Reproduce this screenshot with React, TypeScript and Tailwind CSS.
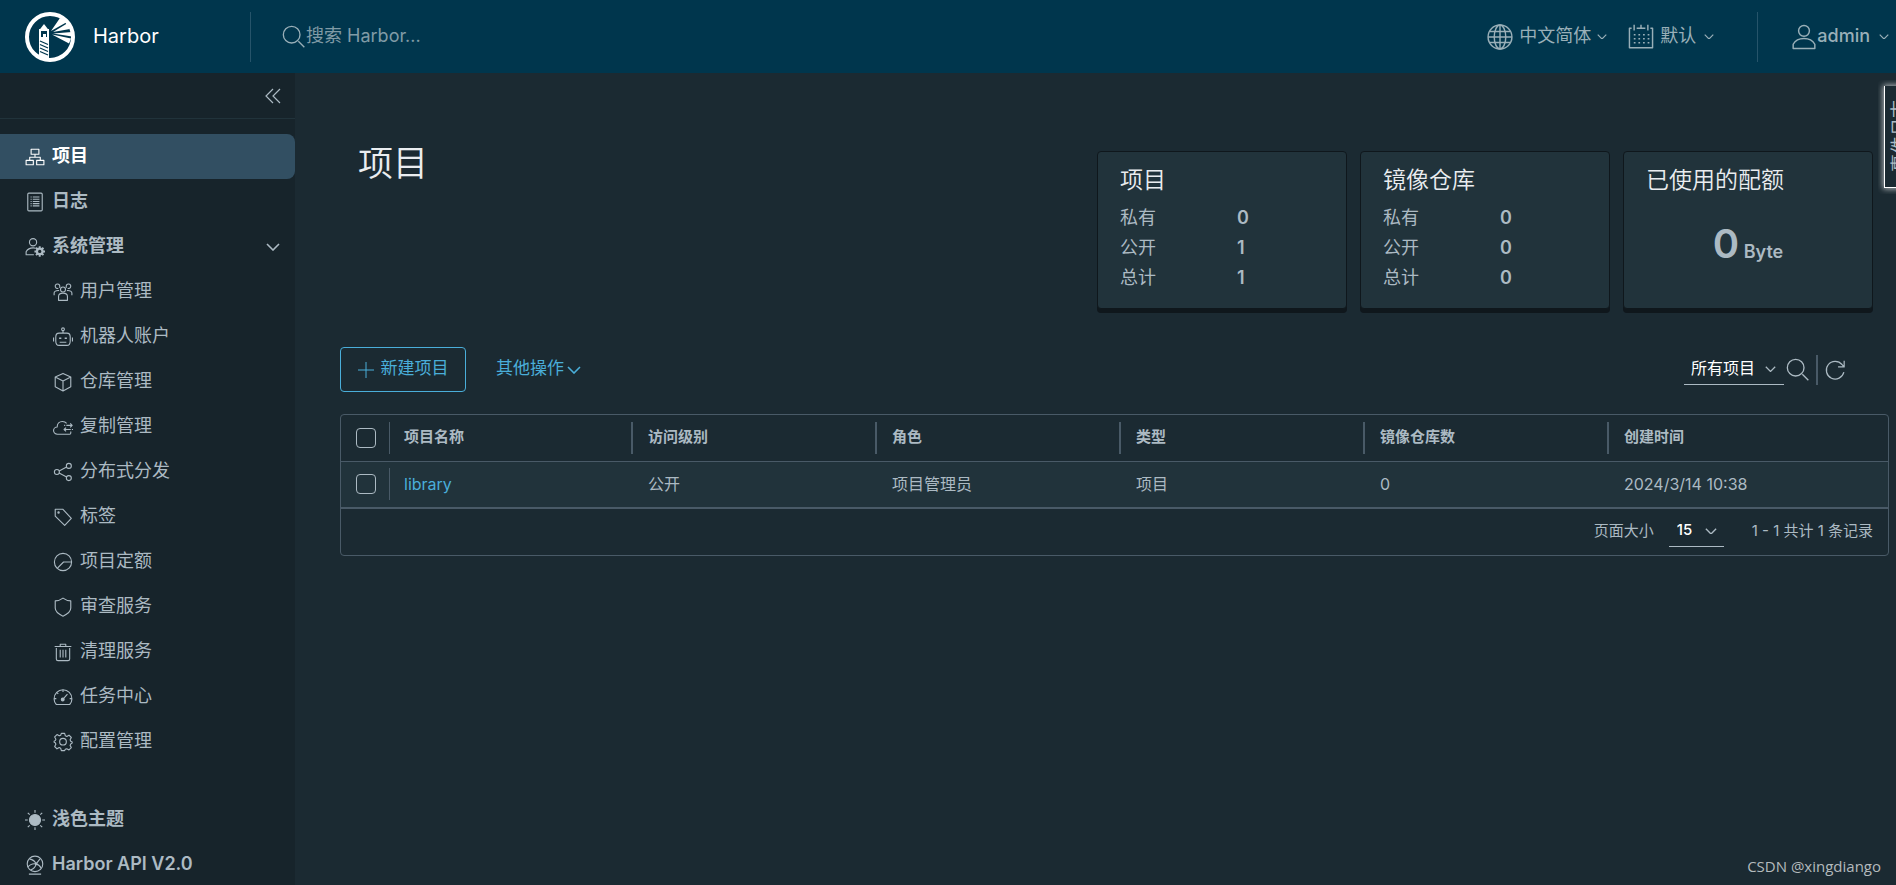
import React, { useState } from 'react';

interface IconProps {
  className?: string;
  children?: React.ReactNode;
}

// All line icons share one 36 x 36 grid
const Icon: React.FC<IconProps> = ({ className, children }) => (
  <svg
    viewBox="0 0 36 36"
    fill="none"
    stroke="currentColor"
    strokeWidth={2}
    strokeLinejoin="round"
    aria-hidden="true"
    className={`shrink-0 ${className ?? 'size-5'}`}
  >
    {children}
  </svg>
);

const Chevron: React.FC<{ className?: string }> = ({ className }) => (
  <svg viewBox="0 0 14 8" fill="none" stroke="currentColor" strokeWidth={1.6} aria-hidden="true" className={`shrink-0 ${className ?? ''}`}>
    <path d="M1 1l6 6 6-6" />
  </svg>
);

const icons = {
  projects: (
    <>
      <path d="M11 4h14v9H11zM2 24h13v8H2zM21 24h13v8H21z" />
      <path d="M18 13v5M8.500 24v-5.500h19V24" />
    </>
  ),
  logs: (
    <>
      <rect x="5" y="2" width="26" height="32" rx="2" />
      <path d="M10 9h2M14 9h12M10 13h2M14 13h12M10 17h2M14 17h12M10 21h2M14 21h12M10 25h2M14 25h12" />
    </>
  ),
  admin: (
    <>
      <circle cx="14.500" cy="9.500" r="6.500" />
      <path d="M16 32H2v-5.500c2.500-4.500 7-7 12.500-7 1.800 0 3.300.2 4.800.8" />
      <circle cx="26.500" cy="26" r="5" strokeWidth={4} />
      <path d="M26.500 16.500v4M26.500 31.500v4M17 26h4M32 26h4M19.800 19.300l2.800 2.800M30.400 29.900l2.800 2.800M33.200 19.300l-2.800 2.800M22.600 29.900l-2.800 2.800" strokeWidth={3.5} />
    </>
  ),
  users: (
    <>
      <circle cx="18" cy="13.500" r="4.500" />
      <path d="M10 33v-7c0-4 3.500-6 8-6s8 2 8 6v7z" />
      <path d="M12 10.500c1-5-1-7-4-7s-5 3-3.500 6c1 2 3 2.500 5 2M24 10.500c-1-5 1-7 4-7s5 3 3.500 6c-1 2-3 2.500-5 2M2 24v-4c0-3 3-5 9-4.500M34 24v-4c0-3-3-5-9-4.500" />
    </>
  ),
  robot: (
    <>
      <path d="M11 11h14c4 0 6 3 6 7v7c0 4-2 8-6 8H11c-4 0-6-4-6-8v-7c0-4 2-7 6-7z" />
      <circle cx="18" cy="4" r="2.500" />
      <path d="M18 6.500V11M1 19v7M35 19v7M12 27.500h12" />
      <path d="M11 19h4v2.500h-4zM21 19h4v2.500h-4z" fill="currentColor" stroke="none" />
    </>
  ),
  registry: <path d="M18 2.500l14 6.500v17.500L18 34 4 26.500V9zM4 9l14 7 14-7M18 16v18" />,
  replication: (
    <>
      <path d="M32 26v3c0 1-1 2-2 2H8c-4 0-7-3-7-6.500C1 21 4 18 7.500 18c0-6 4-10 9.500-10 3 0 5.500 1 7.500 3.500" />
      <path d="M20 15h2M24 15h10M31 11.500l3.500 3.500-3.500 3.500M36 22.500h-2M32 22.500H20M23.500 19L20 22.500l3.500 3.500" />
    </>
  ),
  share: (
    <>
      <circle cx="7" cy="18" r="4.500" />
      <circle cx="28.500" cy="7" r="4.500" />
      <circle cx="28.500" cy="29" r="4.500" />
      <path d="M11 16l13.500-7M11 20l13.500 7" />
    </>
  ),
  tag: (
    <>
      <path d="M4 4h13.500L33 20.500 21 33 4 16.500z" />
      <circle cx="10" cy="10" r="1.200" />
    </>
  ),
  quota: (
    <>
      <circle cx="18" cy="18" r="15.500" />
      <path d="M33 18H19L8 29" />
    </>
  ),
  shield: <path d="M18 2c4 3 8.500 5 14 5v13c0 7-5 10.500-14 14.500C9 30.500 4 27 4 20V7c5.500 0 10-2 14-5z" />,
  trash: (
    <>
      <path d="M3 8h30M13 8V4h10v4M6 11v19.500c0 2 1 3 3 3h18c2 0 3-1 3-3V11" />
      <path d="M13 14v14M18 14v14M23 14v14" />
    </>
  ),
  gauge: (
    <>
      <path d="M6 31.500C3.500 29 2 25.500 2 21.500 2 12.500 9 5 18 5s16 7.500 16 16.500c0 4-1.500 7.500-4 10z" />
      <path d="M18 5v4M2 21h4M30 21h4M7 10l2.500 2.500M18 22l8-9" />
      <circle cx="17.500" cy="22.500" r="2.500" fill="currentColor" />
    </>
  ),
  cog: (
    <>
      <path d="M15 2.500h6l1.200 4.300 2.600 1.100 4-2.200 4.200 4.200-2.200 4 1.100 2.600 2.600 1.500v2l-2.600 1.500-1.100 2.600 2.200 4-4.200 4.200-4-2.200-2.600 1.100L21 33.500h-6l-1.200-4.300-2.600-1.100-4 2.200L3 26.100l2.200-4-1.100-2.600L2 18.500v-2l2.100-1 1.100-2.600-2.200-4L7.200 4.700l4 2.200 2.600-1.100z" />
      <circle cx="18" cy="17.500" r="6" />
    </>
  ),
  sun: (
    <>
      <circle cx="18" cy="18" r="10" fill="currentColor" />
      <path d="M18 0v5M18 31v5M0 18h5M31 18h5M5 5l3.500 3.500M27.500 27.500L31 31M31 5l-3.500 3.500M8.500 27.500L5 31" />
    </>
  ),
  api: (
    <>
      <circle cx="18" cy="16" r="14" />
      <path d="M7 34.500h22M8 7c5 1 10 4 12 9 4 1 7 3 9 8M20 16c-5-1-11 1-15 6M20 16c-1 6-4 9-10 11M20 16l7-9" />
      <circle cx="20" cy="16" r="1.500" fill="currentColor" />
    </>
  ),
};

type IconName = keyof typeof icons;

interface NavItem {
  label: string;
  icon: IconName;
}

const adminItems: NavItem[] = [
  { label: '用户管理', icon: 'users' },
  { label: '机器人账户', icon: 'robot' },
  { label: '仓库管理', icon: 'registry' },
  { label: '复制管理', icon: 'replication' },
  { label: '分布式分发', icon: 'share' },
  { label: '标签', icon: 'tag' },
  { label: '项目定额', icon: 'quota' },
  { label: '审查服务', icon: 'shield' },
  { label: '清理服务', icon: 'trash' },
  { label: '任务中心', icon: 'gauge' },
  { label: '配置管理', icon: 'cog' },
];

const stats = [
  { title: '项目', rows: [['私有', 0], ['公开', 1], ['总计', 1]] },
  { title: '镜像仓库', rows: [['私有', 0], ['公开', 0], ['总计', 0]] },
];

const columns = ['项目名称', '访问级别', '角色', '类型', '镜像仓库数', '创建时间'];

const projects = [
  { name: 'library', access: '公开', role: '项目管理员', type: '项目', repos: 0, created: '2024/3/14 10:38' },
];

const SearchIcon: React.FC<{ className?: string }> = ({ className }) => (
  <Icon className={className}>
    <circle cx="14.500" cy="14.500" r="12.500" />
    <path d="M24.500 24.500l9 9" />
  </Icon>
);

const Logo = () => (
  <svg viewBox="0 0 50 50" className="size-[50px] shrink-0" aria-hidden="true">
    <circle cx="25" cy="25" r="23" fill="none" stroke="#fff" strokeWidth={4} />
    {/* Light beams */}
    <path d="M26 19L35 6l7 4zM28 20l14-8.500 3 5.500zM28 21.500l19-1.500v4.500zM27 22.500l19 4-2 5z" fill="#fff" />
    {/* Tower */}
    <path d="M14 18.500l5-6.500 5 6.500z" fill="#fff" />
    <path d="M15 18h8v8h-8z" fill="none" stroke="#fff" strokeWidth={2} />
    <path d="M18 22h3v3h-3z" fill="#fff" />
    <path d="M14 27h10v21l-10-3z" fill="#fff" />
    <path d="M15 29l8 3.500M15 32.500l8 3.500M15 36l8 3.500M15 39.500l8 3.500" stroke="#00364d" strokeWidth={1.3} />
  </svg>
);

const NavLink: React.FC<NavItem & { active?: boolean; nested?: boolean }> = ({ label, icon, active, nested }) => (
  <a
    href="#"
    className={`flex h-[45px] shrink-0 items-center gap-[7px] text-lg ${nested ? 'pl-[53px]' : 'pl-[25px] font-semibold'} ${active ? 'rounded-r-lg bg-[#324f62] text-white' : ''}`}
  >
    <Icon className="size-5">{icons[icon]}</Icon>
    <span className="pb-[2px]">{label}</span>
  </a>
);

const Checkbox: React.FC<{ label: string; checked: boolean; onChange: () => void }> = ({ label, checked, onChange }) => (
  <input
    type="checkbox"
    aria-label={label}
    checked={checked}
    onChange={onChange}
    className="block size-5 appearance-none rounded-sm border border-[#acbac3] checked:bg-[#4aaed9]"
  />
);

export default function App() {
  const [search, setSearch] = useState('');
  const [menuOpen, setMenuOpen] = useState(true);
  const [selected, setSelected] = useState<string[]>([]);

  const toggle = (name: string) =>
    setSelected(selected.includes(name) ? selected.filter(n => n !== name) : [...selected, name]);
  const allSelected = selected.length === projects.length;

  return (
    <div className="flex h-screen flex-col overflow-hidden bg-[#1b2a32] font-['Inter','Noto_Sans_CJK_SC',sans-serif] text-base text-[#acbac3]">
      {/* Header */}
      <header className="flex h-[73px] shrink-0 items-center bg-[#00364d] text-lg text-[#99afb8]">
        <a href="#" className="flex h-[50px] w-[251px] items-center gap-[18px] border-r border-[#26546a] pl-[25px] text-xl text-white">
          <Logo />
          <span className="pb-[2px]">Harbor</span>
        </a>
        <label className="flex flex-1 items-center pl-[31px]">
          <SearchIcon className="size-6" />
          <input
            type="text"
            aria-label="搜索 Harbor"
            value={search}
            onChange={e => setSearch(e.target.value)}
            placeholder="搜索 Harbor..."
            className="w-64 bg-transparent pb-[2px] outline-none placeholder:text-[#809ba6]"
          />
        </label>
        <div className="flex items-center gap-[21px] pr-[43px]">
          <button type="button" className="flex items-center gap-[6px]">
            <Icon className="size-[26px]">
              <circle cx="18" cy="18" r="16.500" />
              <ellipse cx="18" cy="18" rx="8" ry="16.500" />
              <path d="M18 1.500v33M1.500 18h33M4 10.500h28M4 25.500h28" />
            </Icon>
            <span className="pb-[2px]">中文简体</span>
            <Chevron className="w-[10px]" />
          </button>
          <button type="button" className="flex items-center gap-[6px]">
            <Icon className="size-[26px]">
              <path d="M5 6H2v27h32V6h-3M12 6h12M8.500 1v8M18 1v6M27.500 1v8" />
              <path d="M8 15h22M8 20.500h22M8 26h22" strokeDasharray="2.400 4" />
            </Icon>
            <span className="pb-[2px]">默认</span>
            <Chevron className="ml-[2px] w-[10px]" />
          </button>
        </div>
        <button type="button" className="flex h-[50px] items-center border-l border-[#26546a] pr-[7px] pl-[33px] font-medium">
          <Icon className="size-[26px]">
            <circle cx="18" cy="9.500" r="7.500" />
            <path d="M3 34v-6c3-5.500 8.500-8 15-8s12 2.500 15 8v6z" />
          </Icon>
          <span className="pb-[2px]">admin</span>
          <Chevron className="ml-[9px] w-[10px]" />
        </button>
      </header>

      <div className="flex min-h-0 flex-1">
        {/* Side navigation */}
        <nav className="flex w-[295px] shrink-0 flex-col overflow-hidden bg-[#17242b]">
          <div className="flex h-[46px] shrink-0 items-center justify-end border-b border-[#21333b] pr-[14px]">
            <button type="button" aria-label="收起">
              <svg viewBox="0 0 16 16" fill="none" stroke="currentColor" strokeWidth={1.2} className="size-4">
                <path d="M8 1L1 8l7 7M15 1L8 8l7 7" />
              </svg>
            </button>
          </div>
          <div className="mt-[15px] flex flex-col">
            <NavLink label="项目" icon="projects" active />
            <NavLink label="日志" icon="logs" />
            <button
              type="button"
              onClick={() => setMenuOpen(!menuOpen)}
              aria-expanded={menuOpen}
              className="flex h-[45px] shrink-0 items-center gap-[7px] pr-[15px] pl-[25px] text-lg font-semibold"
            >
              <Icon className="size-5">{icons.admin}</Icon>
              <span className="pb-[2px]">系统管理</span>
              <Chevron className="ml-auto w-[14px]" />
            </button>
            {menuOpen && adminItems.map(item => <NavLink key={item.label} {...item} nested />)}
          </div>
          <div className="mt-[33px] flex flex-col">
            <NavLink label="浅色主题" icon="sun" />
            <NavLink label="Harbor API V2.0" icon="api" />
          </div>
        </nav>

        <main className="min-w-0 flex-1 pt-[78px] pr-[7px] pl-[45px]">
          {/* Title and summary */}
          <div className="flex justify-between pr-4 pl-[18px]">
            <h1 className="text-[35px] leading-6 font-[350] text-[#eaedf0]">项目</h1>
            <div className="flex gap-[13px]">
              {stats.map(({ title, rows }) => (
                <section key={title} className="h-[158px] w-[250px] rounded border border-[#0f171c] bg-[#21333b] px-[22px] pt-[14px] shadow-[0_4px_0_0_#0f171c]">
                  <h2 className="text-[23px] leading-7 font-[350] text-[#eaedf0]">{title}</h2>
                  <dl className="mt-[9px] text-lg leading-[30px]">
                    {rows.map(([label, value]) => (
                      <div key={label} className="flex">
                        <dt className="w-[117px]">{label}</dt>
                        <dd className="font-semibold">{value}</dd>
                      </div>
                    ))}
                  </dl>
                </section>
              ))}
              <section className="h-[158px] w-[250px] rounded border border-[#0f171c] bg-[#21333b] px-[22px] pt-[14px] shadow-[0_4px_0_0_#0f171c]">
                <h2 className="text-[23px] leading-7 font-[350] text-[#eaedf0]">已使用的配额</h2>
                <p className="mt-[34px] text-center text-lg leading-8 font-semibold">
                  <span className="text-[40px] leading-8">0</span> Byte
                </p>
              </section>
            </div>
          </div>

          {/* Toolbar */}
          <div className="mt-[38px] flex items-center text-base">
            <button type="button" className="flex h-[45px] w-[126px] items-center justify-center gap-[7px] rounded border border-[#4aaed9] text-[17px] text-[#4aaed9]">
              <svg viewBox="0 0 16 16" stroke="currentColor" className="size-4" aria-hidden="true">
                <path d="M8 0v16M0 8h16" />
              </svg>
              <span className="pb-[2px]">新建项目</span>
            </button>
            <button type="button" className="ml-[30px] flex items-center gap-[3px] text-[17px] text-[#4aaed9]">
              <span className="pb-[2px]">其他操作</span>
              <Chevron className="w-[14px]" />
            </button>
            <div className="ml-auto flex items-center pr-[43px]">
              <div className="relative border-b border-[#acbac3]">
                <select aria-label="项目范围" className="h-[30px] w-[100px] appearance-none bg-transparent pb-[2px] pl-[7px] text-white outline-none">
                  <option>所有项目</option>
                </select>
                <Chevron className="pointer-events-none absolute top-3 right-2 w-[11px]" />
              </div>
              <button type="button" aria-label="搜索" className="ml-[2px]">
                <SearchIcon className="size-6" />
              </button>
              <span className="ml-[6px] h-[30px] w-[2px] bg-[#495a67]" />
              <button type="button" aria-label="刷新" className="ml-[6px]">
                <Icon className="size-[22px]">
                  <path d="M32.500 21.500A14.500 14.500 0 1 1 29.500 9l3 4M33 3v10H23" />
                </Icon>
              </button>
            </div>
          </div>

          {/* Project list */}
          <div className="mt-[22px] rounded border border-[#495a67]">
            <table className="w-full table-fixed text-left">
              <colgroup>
                <col className="w-[48px]" />
                {columns.map((c, i) => <col key={c} className={i < columns.length - 1 ? 'w-[244px]' : ''} />)}
              </colgroup>
              <thead>
                <tr className="h-[46px] border-b border-[#495a67] text-[15px]">
                  <th className="pl-[15px]">
                    <Checkbox
                      label="全选"
                      checked={allSelected}
                      onChange={() => setSelected(allSelected ? [] : projects.map(p => p.name))}
                    />
                  </th>
                  {columns.map((c, i) => (
                    <th key={c} className="font-semibold">
                      <div className={`flex h-8 items-center border-[#495a67] pb-[2px] ${i === 0 ? 'border-l pl-[14px]' : '-ml-[2px] border-l-2 pl-[15px]'}`}>{c}</div>
                    </th>
                  ))}
                </tr>
              </thead>
              <tbody>
                {projects.map(p => (
                  <tr key={p.name} className="h-[47px] border-b-2 border-[#495a67] bg-[#21333b]">
                    <td className="pl-[15px]">
                      <Checkbox label={p.name} checked={selected.includes(p.name)} onChange={() => toggle(p.name)} />
                    </td>
                    <td>
                      <div className="flex h-8 items-center border-l border-[#495a67] pl-[14px]">
                        <a href="#" className="text-[#4aaed9]">{p.name}</a>
                      </div>
                    </td>
                    <td className="pl-[15px]">{p.access}</td>
                    <td className="pl-[15px]">{p.role}</td>
                    <td className="pl-[15px]">{p.type}</td>
                    <td className="pl-[15px]">{p.repos}</td>
                    <td className="pl-[15px]">{p.created}</td>
                  </tr>
                ))}
              </tbody>
            </table>
            <div className="flex h-[46px] items-center justify-end pr-[15px] pb-[2px] text-[15px]">
              <label htmlFor="page-size">页面大小</label>
              <div className="relative ml-[15px] border-b border-[#acbac3]">
                <select id="page-size" className="h-[30px] w-[55px] appearance-none bg-transparent pl-2 font-medium text-white outline-none">
                  <option>15</option>
                </select>
                <Chevron className="pointer-events-none absolute top-3 right-[7px] w-3" />
              </div>
              <span className="ml-7">1 - 1 共计 1 条记录</span>
            </div>
          </div>
        </main>
      </div>

      {/* Event log drawer handle, mostly off the right edge */}
      <div className="absolute top-[86px] right-0 h-[102px] w-3 overflow-clip [overflow-clip-margin:6px]">
        <button
          type="button"
          className="flex h-[102px] w-10 rotate-180 items-start justify-center border-t border-r border-white bg-[#1b2a32] pr-[5px] text-lg leading-5 shadow-[0_0_6px_1px_#ffffffaa] [text-orientation:sideways] [writing-mode:vertical-rl]"
        >
          事件日志
        </button>
      </div>

      <span className="absolute right-[15px] bottom-2 font-['Open_Sans',sans-serif] text-[15px] leading-[22px] text-[#b4babd]">CSDN @xingdiango</span>
    </div>
  );
}
